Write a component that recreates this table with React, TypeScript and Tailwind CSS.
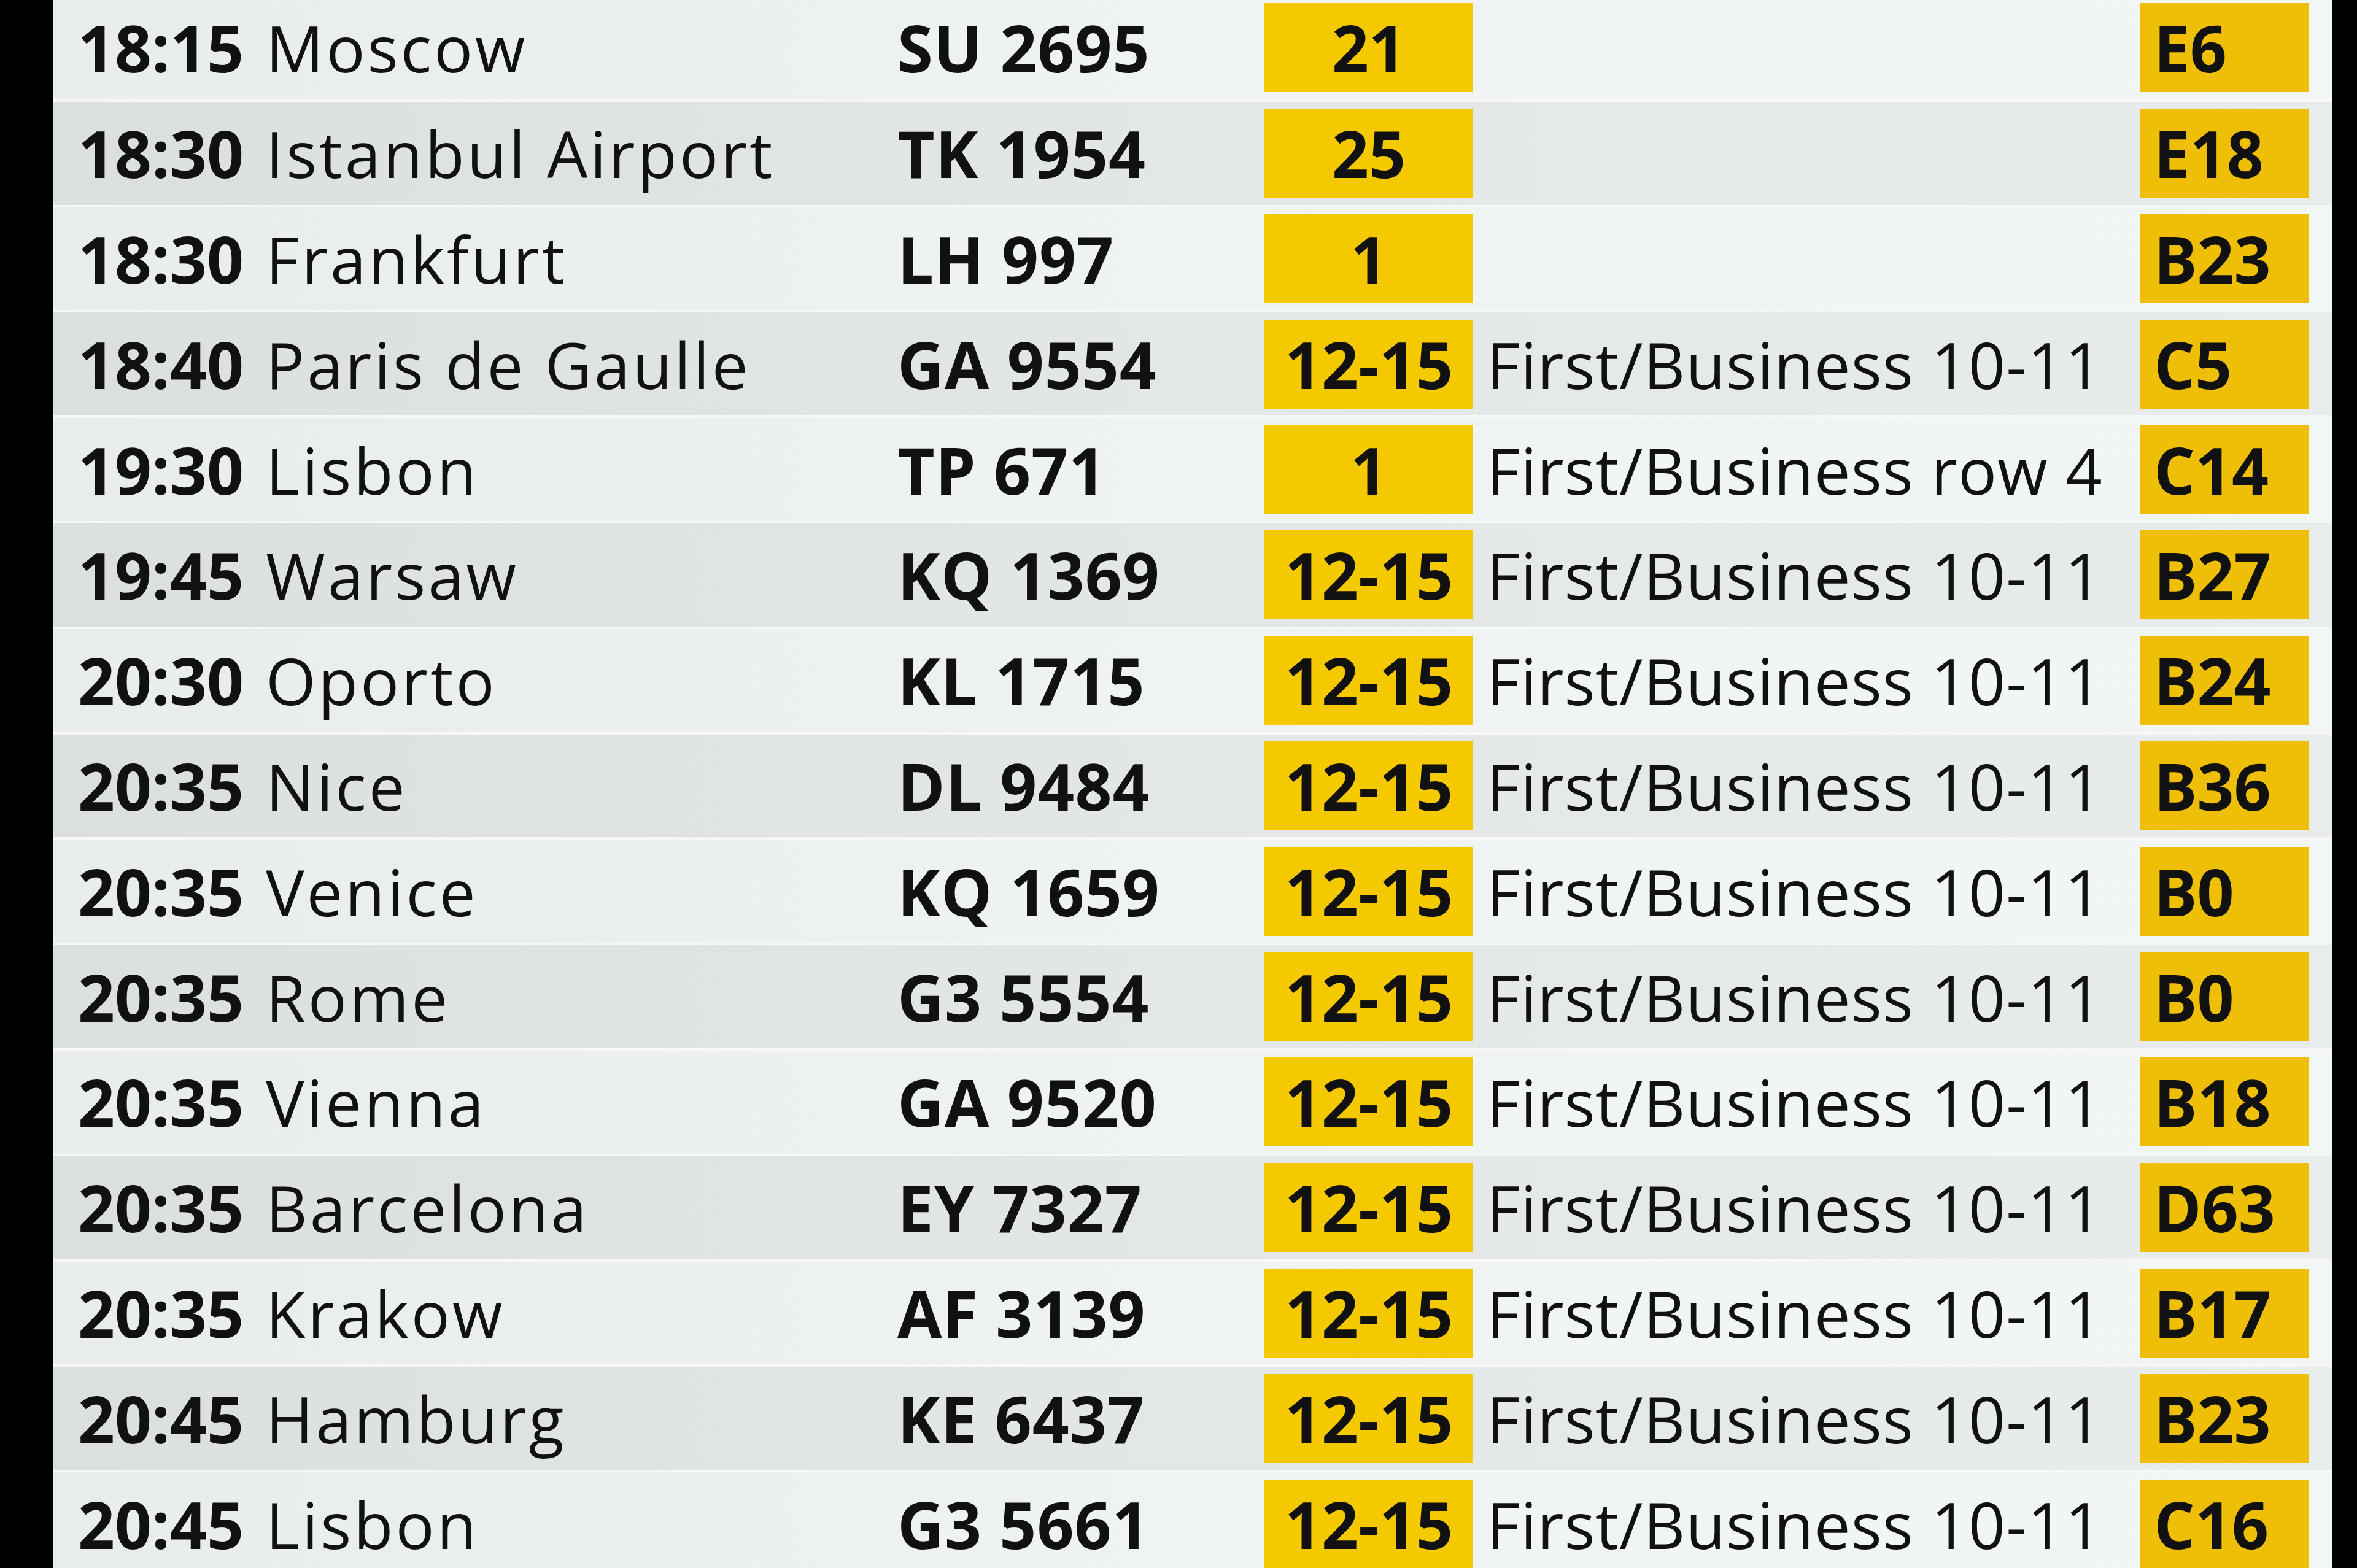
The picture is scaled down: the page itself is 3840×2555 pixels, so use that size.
import React from "react";

type Row = {
  time: string;
  city: string;
  flight: string;
  desk: string;
  remark: string;
  gate: string;
};

const rows: Row[] = [
  { time: "18:15", city: "Moscow", flight: "SU 2695", desk: "21", remark: "", gate: "E6" },
  { time: "18:30", city: "Istanbul Airport", flight: "TK 1954", desk: "25", remark: "", gate: "E18" },
  { time: "18:30", city: "Frankfurt", flight: "LH 997", desk: "1", remark: "", gate: "B23" },
  { time: "18:40", city: "Paris de Gaulle", flight: "GA 9554", desk: "12-15", remark: "First/Business 10-11", gate: "C5" },
  { time: "19:30", city: "Lisbon", flight: "TP 671", desk: "1", remark: "First/Business row 4", gate: "C14" },
  { time: "19:45", city: "Warsaw", flight: "KQ 1369", desk: "12-15", remark: "First/Business 10-11", gate: "B27" },
  { time: "20:30", city: "Oporto", flight: "KL 1715", desk: "12-15", remark: "First/Business 10-11", gate: "B24" },
  { time: "20:35", city: "Nice", flight: "DL 9484", desk: "12-15", remark: "First/Business 10-11", gate: "B36" },
  { time: "20:35", city: "Venice", flight: "KQ 1659", desk: "12-15", remark: "First/Business 10-11", gate: "B0" },
  { time: "20:35", city: "Rome", flight: "G3 5554", desk: "12-15", remark: "First/Business 10-11", gate: "B0" },
  { time: "20:35", city: "Vienna", flight: "GA 9520", desk: "12-15", remark: "First/Business 10-11", gate: "B18" },
  { time: "20:35", city: "Barcelona", flight: "EY 7327", desk: "12-15", remark: "First/Business 10-11", gate: "D63" },
  { time: "20:35", city: "Krakow", flight: "AF 3139", desk: "12-15", remark: "First/Business 10-11", gate: "B17" },
  { time: "20:45", city: "Hamburg", flight: "KE 6437", desk: "12-15", remark: "First/Business 10-11", gate: "B23" },
  { time: "20:45", city: "Lisbon", flight: "G3 5661", desk: "12-15", remark: "First/Business 10-11", gate: "C16" },
];

function BoardRow({ row, dark }: { row: Row; dark: boolean }) {
  return (
    <div
      className={
        "flex h-[171.8px] shrink-0 items-center border-b-[4px] border-[#f6f8f8] text-[105px] leading-none text-[#111111] " +
        (dark
          ? "bg-linear-to-r from-[#dcdfdf] via-[#e4e7e8] to-[#e9eced]"
          : "bg-linear-to-r from-[#e9ecec] via-[#f0f3f3] to-[#f3f6f6]")
      }
    >
      <div className="w-[346px] shrink-0 pl-[40px] font-bold">{row.time}</div>
      <div className="w-[1029px] shrink-0 whitespace-nowrap tracking-[4px]">{row.city}</div>
      <div className="w-[598px] shrink-0 whitespace-nowrap font-bold tracking-[1px]">{row.flight}</div>
      <div className="flex h-[145px] w-[340px] shrink-0 items-center justify-center bg-[#f5c900] font-bold">
        {row.desk}
      </div>
      <div className="w-[1087px] shrink-0 whitespace-nowrap pl-[22px] tracking-[1px]">{row.remark}</div>
      <div className="flex h-[145px] w-[275px] shrink-0 items-center bg-[#eebf06] pl-[22px] font-bold">
        {row.gate}
      </div>
      <div className="w-[38px] shrink-0" />
    </div>
  );
}

export default function App() {
  return (
    <div
      className="flex h-[2555px] w-[3840px] overflow-hidden bg-black"
      style={{ fontFamily: '"Open Sans", "Noto Sans", "Liberation Sans", sans-serif' }}
    >
      <div className="w-[87px] shrink-0 bg-black" />
      <div className="-mt-[6px] flex w-[3713px] shrink-0 flex-col">
        {rows.map((r, i) => (
          <BoardRow key={i} row={r} dark={i % 2 === 1} />
        ))}
      </div>
      <div className="flex-1 bg-black" />
    </div>
  );
}
